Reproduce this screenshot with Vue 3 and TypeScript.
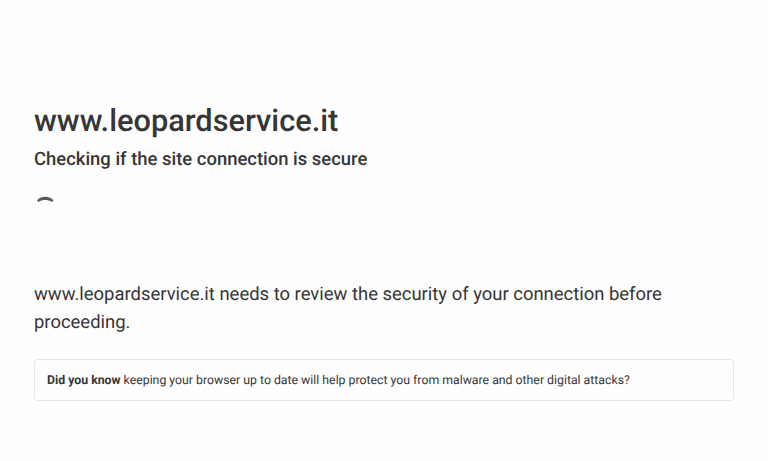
<script setup lang="ts">
const host: string = 'www.leopardservice.it'
</script>

<template>
  <main class="page">
    <h1 class="title">{{ host }}</h1>
    <h2 class="subtitle">Checking if the site connection is secure</h2>
    <div class="spinner">
      <svg width="24" height="24" viewBox="0 0 24 24" aria-hidden="true">
        <path d="M3 10.4 C6.5 5.4 16 5.4 19.5 10.4 L18 12 C14 9.4 8.5 9.4 4.6 12 Z" fill="#595959" />
      </svg>
    </div>
    <p class="message">{{ host }} needs to review the security of your connection before proceeding.</p>
    <div class="fact"><strong>Did you know</strong> keeping your browser up to date will help protect you from malware and other digital attacks?</div>
  </main>
</template>

<style>
body {
  background: #fefefe;
}
</style>

<style scoped>
.page {
  box-sizing: border-box;
  height: 461px;
  padding: 100px 34px 0;
  color: #363636;
  font-family: Roboto, sans-serif;
  text-rendering: geometricPrecision;
}
.title {
  margin: 0;
  font-size: 30.75px;
  font-weight: 500;
  line-height: 42px;
}
.subtitle {
  margin: 5px 0 0;
  font-size: 18.46px;
  font-weight: 500;
  line-height: 24px;
}
.spinner {
  height: 24px;
  margin-top: 19px;
}
.spinner svg {
  display: block;
}
.message {
  margin: 66px 0 0;
  font-size: 18.44px;
  line-height: 28px;
}
.fact {
  box-sizing: border-box;
  height: 42px;
  margin-top: 23px;
  padding: 0 12px;
  border: 1px solid #e4e4e4;
  border-radius: 4px;
  font-size: 12.29px;
  line-height: 42px;
}
.fact strong {
  font-weight: 700;
}
</style>
